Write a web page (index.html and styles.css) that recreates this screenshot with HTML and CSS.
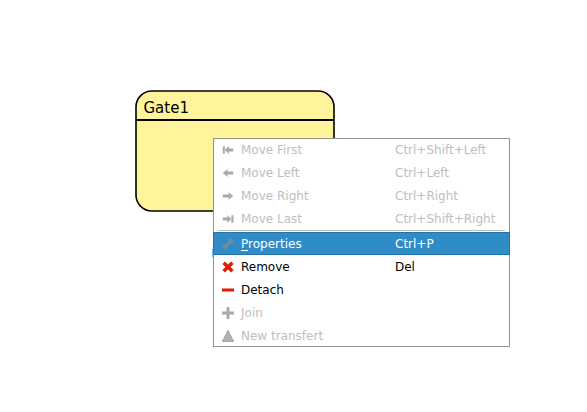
FILE: index.html
```html
<!DOCTYPE html>
<html lang="en">
<head>
<meta charset="utf-8">
<title>Gate diagram</title>
<link rel="stylesheet" href="styles.css">
</head>
<body>
<main class="canvas">
  <section class="gate">
    <svg class="gate-shape" width="202" height="124" viewBox="134 89 202 124"><rect x="136" y="91" width="198" height="120" rx="16" fill="#fff39c" stroke="#000" stroke-width="1.6"/><path d="M136 120H334" stroke="#000" stroke-width="2"/></svg>
    <span class="gate-title">Gate1</span>
  </section>
  <i class="anchor"></i>
  <div class="menu">
    <div class="item disabled"><svg class="icon arrow" viewBox="0 0 14 14"><path d="M2 3.600h1.700v6.800H2zM3.900 7l3.800-3.500v2.200H12v2.600H7.700v2.200z"/></svg><span class="label">Move First</span><span class="key">Ctrl+Shift+Left</span></div>
    <div class="item disabled"><svg class="icon arrow" viewBox="0 0 14 14"><path d="M2 7l4.300-3.500v2.200H12v2.600H6.300v2.200z"/></svg><span class="label">Move Left</span><span class="key">Ctrl+Left</span></div>
    <div class="item disabled"><svg class="icon arrow" viewBox="0 0 14 14"><path d="M12 7L7.700 3.500v2.200H2v2.600h5.700v2.200z"/></svg><span class="label">Move Right</span><span class="key">Ctrl+Right</span></div>
    <div class="item disabled"><svg class="icon arrow" viewBox="0 0 14 14"><path d="M10.600 3.600h1.700v6.800h-1.700zM10.300 7L6.500 3.500v2.200H2v2.600h4.500v2.200z"/></svg><span class="label">Move Last</span><span class="key">Ctrl+Shift+Right</span></div>
    <div class="separator"></div>
    <div class="item lower selected"><svg class="icon" viewBox="0 0 14 14"><path d="M11.300 1L9.500 2.800l.2 1.500 1.500.2L13 2.700c.4 2.300-1.300 3.900-3.600 3.500L6.200 9.400C6.600 11.700 5 13.300 2.700 12.900l1.500-1.500-.2-1.400-1.400-.2L1.100 11.300C.7 9 2.300 7.500 4.600 7.800L7.800 4.600C7.400 2.300 9 .6 11.300 1z"/></svg><span class="label"><u>P</u>roperties</span><span class="key">Ctrl+P</span></div>
    <div class="item lower"><svg class="icon red" viewBox="0 0 14 14"><path d="M1.400 3.900L3.900 1.400 7 4.500 10.100 1.400 12.600 3.900 9.500 7 12.600 10.100 10.100 12.600 7 9.500 3.900 12.600 1.400 10.100 4.500 7z"/></svg><span class="label">Remove</span><span class="key">Del</span></div>
    <div class="item lower"><svg class="icon red" viewBox="0 0 14 14"><rect x="1" y="5.500" width="12" height="3" rx=".3"/></svg><span class="label">Detach</span></div>
    <div class="item lower disabled"><svg class="icon" viewBox="0 0 14 14"><path d="M5.500 1h3v4.500H13v3H8.500V13h-3V8.500H1v-3h4.500z"/></svg><span class="label">Join</span></div>
    <div class="item lower disabled"><svg class="icon" viewBox="0 0 14 14"><path d="M7 1.300L12.700 12.500H1.300z" fill="#b2b2b2" stroke="#a2a2a2" stroke-width=".9"/></svg><span class="label">New transfert</span></div>
  </div>
</main>
</body>
</html>
```

FILE: styles.css
```css
body {
  margin: 0;
  background: #fff;
  font-family: "DejaVu Sans", sans-serif;
}

.canvas {
  position: relative;
  width: 587px;
  height: 412px;
  overflow: hidden;
}

.gate {
  position: absolute;
  left: 134px;
  top: 89px;
  width: 202px;
  height: 124px;
}

.gate-shape {
  display: block;
}

.gate-title {
  position: absolute;
  left: 9.5px;
  top: 10px;
  font-size: 15px;
  line-height: 18px;
}

.anchor {
  position: absolute;
  left: 212px;
  top: 249px;
  width: 2px;
  height: 8px;
  background: #7dbcf2;
  border-bottom: 1px solid #b5d2e8;
}

.menu {
  position: absolute;
  left: 213px;
  top: 138px;
  box-sizing: border-box;
  width: 297px;
  height: 209px;
  border: 1px solid #949494;
  background: #fff;
  font-size: 12px;
  color: #000;
}

.item {
  display: grid;
  grid-template-columns: 19px 154px 1fr;
  align-items: center;
  box-sizing: border-box;
  height: 23px;
  padding-left: 8px;
  line-height: 23px;
  white-space: nowrap;
}

.icon {
  display: block;
  width: 14px;
  height: 14px;
  margin-left: -1px;
  fill: #aaa;
}

.icon.arrow {
  margin-bottom: 1px;
  stroke: #aaa;
  stroke-width: 0.4;
}

.icon.red {
  fill: #e11b05;
}

.key {
  grid-column: 3;
}

.lower .label,
.lower .key {
  height: 23px;
  line-height: 25px;
}

.disabled {
  color: #bebebe;
}

.selected {
  margin: 0 -1px;
  padding-left: 9px;
  background: #308cc6;
  box-shadow: inset 0 0 0 1px #2574a8;
  color: #fff;
}

.selected .icon {
  fill: #858b90;
}

.selected u {
  text-underline-offset: 2px;
  text-decoration-thickness: 1px;
}

.separator {
  height: 1px;
  margin: -1px 4px 1px;
  background: #bdbdbd;
}
```
